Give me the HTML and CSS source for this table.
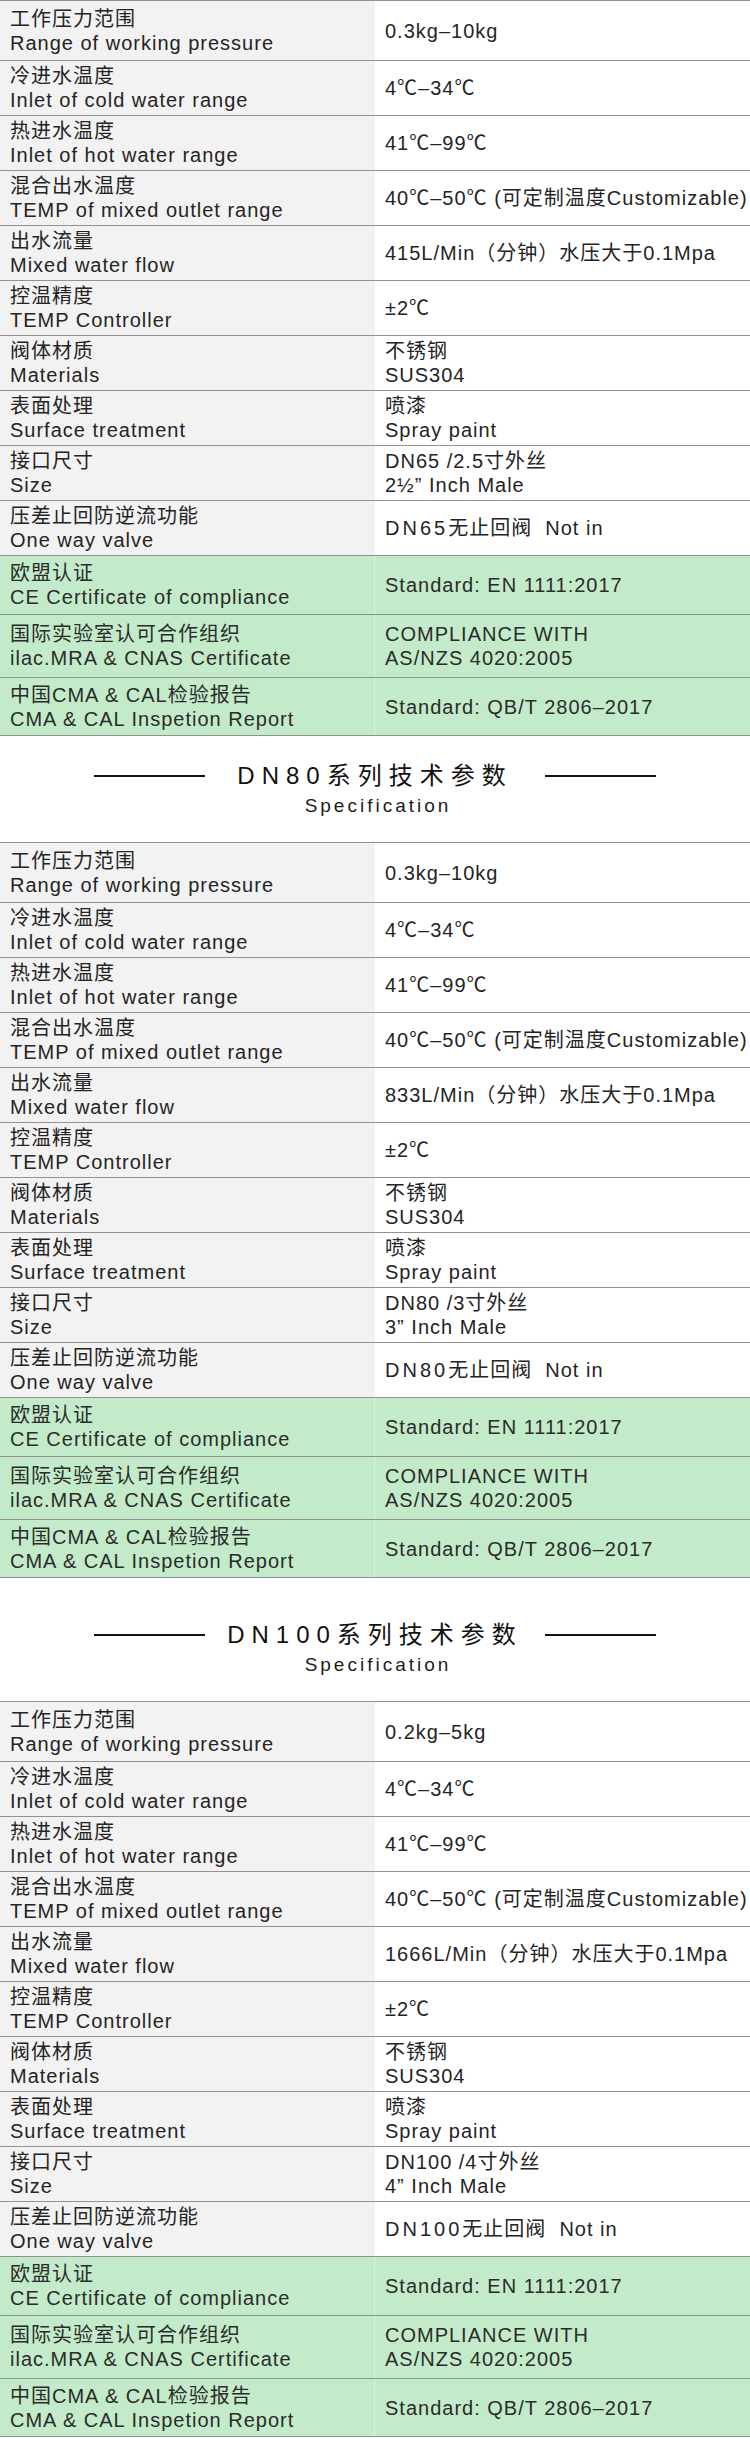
FILE: index.html
```html
<!DOCTYPE html>
<html lang="zh-CN">
<head>
<meta charset="utf-8">
<title>技术参数 Specification</title>
<link rel="stylesheet" href="styles.css">
</head>
<body>
<main class="page">

  <section class="spec-table">
    <div class="row row--lead"><div class="cell cell--label"><span>工作压力范围</span><span>Range of working pressure</span></div><div class="cell cell--value">0.3kg–10kg</div></div>
    <div class="row"><div class="cell cell--label"><span>冷进水温度</span><span>Inlet of cold water range</span></div><div class="cell cell--value">4℃–34℃</div></div>
    <div class="row"><div class="cell cell--label"><span>热进水温度</span><span>Inlet of hot water range</span></div><div class="cell cell--value">41℃–99℃</div></div>
    <div class="row"><div class="cell cell--label"><span>混合出水温度</span><span>TEMP of mixed outlet range</span></div><div class="cell cell--value">40℃–50℃ (可定制温度Customizable)</div></div>
    <div class="row"><div class="cell cell--label"><span>出水流量</span><span>Mixed water flow</span></div><div class="cell cell--value">415L/Min（分钟）水压大于0.1Mpa</div></div>
    <div class="row"><div class="cell cell--label"><span>控温精度</span><span>TEMP Controller</span></div><div class="cell cell--value">±2℃</div></div>
    <div class="row"><div class="cell cell--label"><span>阀体材质</span><span>Materials</span></div><div class="cell cell--value"><span>不锈钢</span><span>SUS304</span></div></div>
    <div class="row"><div class="cell cell--label"><span>表面处理</span><span>Surface treatment</span></div><div class="cell cell--value"><span>喷漆</span><span>Spray paint</span></div></div>
    <div class="row"><div class="cell cell--label"><span>接口尺寸</span><span>Size</span></div><div class="cell cell--value"><span>DN65 /2.5寸外丝</span><span>2½” Inch Male</span></div></div>
    <div class="row"><div class="cell cell--label"><span>压差止回防逆流功能</span><span>One way valve</span></div><div class="cell cell--value"><span><span class="dn">DN65</span>无止回阀&nbsp; Not in</span></div></div>
    <div class="row row--cert row--cert-a"><div class="cell cell--label"><span>欧盟认证</span><span>CE Certificate of compliance</span></div><div class="cell cell--value">Standard: EN 1111:2017</div></div>
    <div class="row row--cert row--cert-b"><div class="cell cell--label"><span>国际实验室认可合作组织</span><span>ilac.MRA &amp; CNAS Certificate</span></div><div class="cell cell--value"><span>COMPLIANCE WITH</span><span>AS/NZS 4020:2005</span></div></div>
    <div class="row row--cert row--cert-c"><div class="cell cell--label"><span>中国CMA &amp; CAL检验报告</span><span>CMA &amp; CAL Inspetion Report</span></div><div class="cell cell--value">Standard: QB/T 2806–2017</div></div>
  </section>

  <header class="spec-head">
    <div class="spec-head__titlebar">
      <span class="spec-head__rule"></span>
      <h2 class="spec-head__title">DN80系列技术参数</h2>
      <span class="spec-head__rule"></span>
    </div>
    <p class="spec-head__sub">Specification</p>
  </header>

  <section class="spec-table">
    <div class="row row--lead"><div class="cell cell--label"><span>工作压力范围</span><span>Range of working pressure</span></div><div class="cell cell--value">0.3kg–10kg</div></div>
    <div class="row"><div class="cell cell--label"><span>冷进水温度</span><span>Inlet of cold water range</span></div><div class="cell cell--value">4℃–34℃</div></div>
    <div class="row"><div class="cell cell--label"><span>热进水温度</span><span>Inlet of hot water range</span></div><div class="cell cell--value">41℃–99℃</div></div>
    <div class="row"><div class="cell cell--label"><span>混合出水温度</span><span>TEMP of mixed outlet range</span></div><div class="cell cell--value">40℃–50℃ (可定制温度Customizable)</div></div>
    <div class="row"><div class="cell cell--label"><span>出水流量</span><span>Mixed water flow</span></div><div class="cell cell--value">833L/Min（分钟）水压大于0.1Mpa</div></div>
    <div class="row"><div class="cell cell--label"><span>控温精度</span><span>TEMP Controller</span></div><div class="cell cell--value">±2℃</div></div>
    <div class="row"><div class="cell cell--label"><span>阀体材质</span><span>Materials</span></div><div class="cell cell--value"><span>不锈钢</span><span>SUS304</span></div></div>
    <div class="row"><div class="cell cell--label"><span>表面处理</span><span>Surface treatment</span></div><div class="cell cell--value"><span>喷漆</span><span>Spray paint</span></div></div>
    <div class="row"><div class="cell cell--label"><span>接口尺寸</span><span>Size</span></div><div class="cell cell--value"><span>DN80 /3寸外丝</span><span>3” Inch Male</span></div></div>
    <div class="row"><div class="cell cell--label"><span>压差止回防逆流功能</span><span>One way valve</span></div><div class="cell cell--value"><span><span class="dn">DN80</span>无止回阀&nbsp; Not in</span></div></div>
    <div class="row row--cert row--cert-a"><div class="cell cell--label"><span>欧盟认证</span><span>CE Certificate of compliance</span></div><div class="cell cell--value">Standard: EN 1111:2017</div></div>
    <div class="row row--cert row--cert-b"><div class="cell cell--label"><span>国际实验室认可合作组织</span><span>ilac.MRA &amp; CNAS Certificate</span></div><div class="cell cell--value"><span>COMPLIANCE WITH</span><span>AS/NZS 4020:2005</span></div></div>
    <div class="row row--cert row--cert-c"><div class="cell cell--label"><span>中国CMA &amp; CAL检验报告</span><span>CMA &amp; CAL Inspetion Report</span></div><div class="cell cell--value">Standard: QB/T 2806–2017</div></div>
  </section>

  <header class="spec-head spec-head--loose">
    <div class="spec-head__titlebar">
      <span class="spec-head__rule"></span>
      <h2 class="spec-head__title">DN100系列技术参数</h2>
      <span class="spec-head__rule"></span>
    </div>
    <p class="spec-head__sub">Specification</p>
  </header>

  <section class="spec-table">
    <div class="row row--lead"><div class="cell cell--label"><span>工作压力范围</span><span>Range of working pressure</span></div><div class="cell cell--value">0.2kg–5kg</div></div>
    <div class="row"><div class="cell cell--label"><span>冷进水温度</span><span>Inlet of cold water range</span></div><div class="cell cell--value">4℃–34℃</div></div>
    <div class="row"><div class="cell cell--label"><span>热进水温度</span><span>Inlet of hot water range</span></div><div class="cell cell--value">41℃–99℃</div></div>
    <div class="row"><div class="cell cell--label"><span>混合出水温度</span><span>TEMP of mixed outlet range</span></div><div class="cell cell--value">40℃–50℃ (可定制温度Customizable)</div></div>
    <div class="row"><div class="cell cell--label"><span>出水流量</span><span>Mixed water flow</span></div><div class="cell cell--value">1666L/Min（分钟）水压大于0.1Mpa</div></div>
    <div class="row"><div class="cell cell--label"><span>控温精度</span><span>TEMP Controller</span></div><div class="cell cell--value">±2℃</div></div>
    <div class="row"><div class="cell cell--label"><span>阀体材质</span><span>Materials</span></div><div class="cell cell--value"><span>不锈钢</span><span>SUS304</span></div></div>
    <div class="row"><div class="cell cell--label"><span>表面处理</span><span>Surface treatment</span></div><div class="cell cell--value"><span>喷漆</span><span>Spray paint</span></div></div>
    <div class="row"><div class="cell cell--label"><span>接口尺寸</span><span>Size</span></div><div class="cell cell--value"><span>DN100 /4寸外丝</span><span>4” Inch Male</span></div></div>
    <div class="row"><div class="cell cell--label"><span>压差止回防逆流功能</span><span>One way valve</span></div><div class="cell cell--value"><span><span class="dn">DN100</span>无止回阀&nbsp; Not in</span></div></div>
    <div class="row row--cert row--cert-a"><div class="cell cell--label"><span>欧盟认证</span><span>CE Certificate of compliance</span></div><div class="cell cell--value">Standard: EN 1111:2017</div></div>
    <div class="row row--cert row--cert-b"><div class="cell cell--label"><span>国际实验室认可合作组织</span><span>ilac.MRA &amp; CNAS Certificate</span></div><div class="cell cell--value"><span>COMPLIANCE WITH</span><span>AS/NZS 4020:2005</span></div></div>
    <div class="row row--cert row--cert-c"><div class="cell cell--label"><span>中国CMA &amp; CAL检验报告</span><span>CMA &amp; CAL Inspetion Report</span></div><div class="cell cell--value">Standard: QB/T 2806–2017</div></div>
  </section>

</main>
</body>
</html>
```

FILE: styles.css
```css
* {
  box-sizing: border-box;
}

html, body {
  margin: 0;
  padding: 0;
  background: #ffffff;
}

.page {
  width: 750px;
  font-family: "Liberation Sans", "Noto Sans CJK SC", sans-serif;
  color: #242424;
}

/* ---------- table ---------- */
.spec-table {
  border-top: 1px solid #929292;
}

.row {
  display: grid;
  grid-template-columns: 375px 375px;
  height: 55px;
  border-bottom: 1px solid #929292;
}

.row--lead { height: 60px; }
.row--cert-a { height: 59px; }
.row--cert-b { height: 63px; }
.row--cert-c { height: 58px; }

.cell {
  display: flex;
  flex-direction: column;
  justify-content: center;
  padding: 0 10px;
  font-size: 20px;
  line-height: 24px;
  letter-spacing: 1px;
  white-space: nowrap;
  overflow: hidden;
}

.cell--label {
  background: #f2f2f2;
}

.cell--value {
  background: #ffffff;
}

.row--cert .cell {
  background: #c3ebca;
  color: #2b2b2b;
}

.row--cert .cell--label {
  border-right: 1px solid #dcf3e0;
}

.dn {
  letter-spacing: 3px;
}

/* ---------- section heading ---------- */
.spec-head {
  padding: 24px 0 22px;
}

.spec-head--loose {
  padding-top: 41px;
}

.spec-head__titlebar {
  width: 562px;
  margin: 0 auto;
  display: flex;
  justify-content: space-between;
  align-items: center;
}

.spec-head__rule {
  width: 111px;
  height: 1.5px;
  background: #111111;
}

.spec-head__title {
  margin: 0;
  font-size: 24px;
  font-weight: 400;
  line-height: 32px;
  letter-spacing: 7px;
  color: #111111;
}

.spec-head__sub {
  margin: 0;
  padding-left: 6px;
  text-align: center;
  font-size: 19px;
  line-height: 28px;
  letter-spacing: 3px;
  color: #1c1c1c;
}
```
